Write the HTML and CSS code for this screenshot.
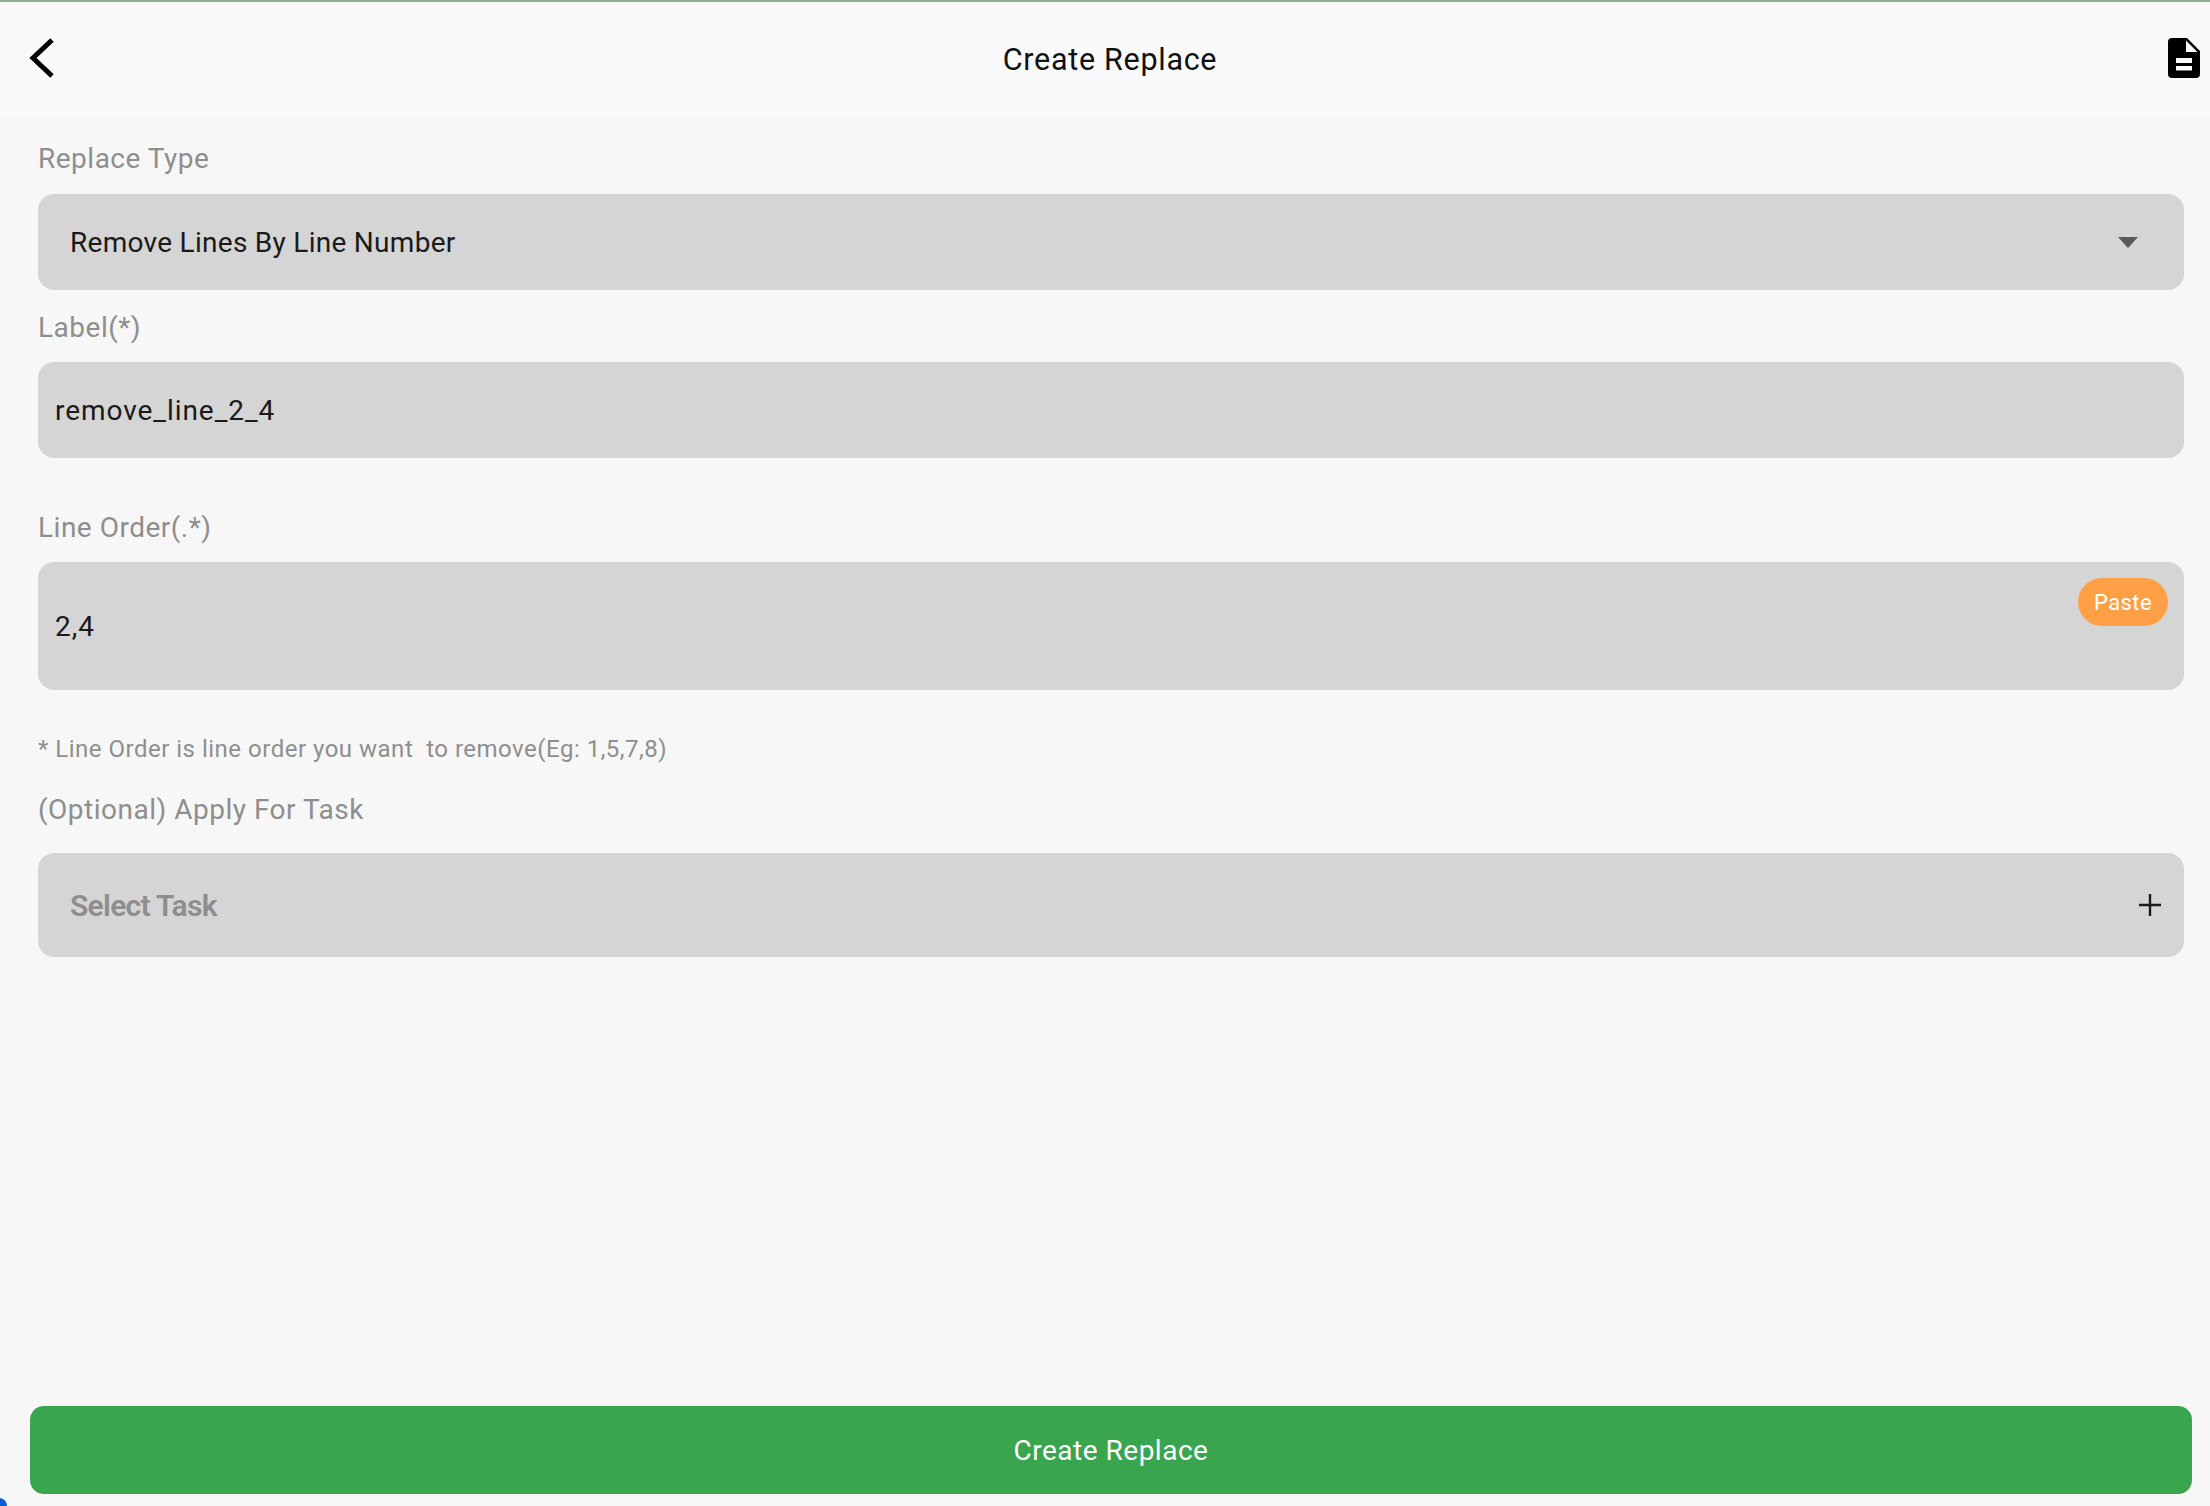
FILE: index.html
```html
<!DOCTYPE html>
<html lang="en">
<head>
<meta charset="utf-8">
<title>Create Replace</title>
<link rel="stylesheet" href="styles.css">
</head>
<body>
<div class="app">
  <header class="topbar">
    <button class="icon-btn back" aria-label="Back">
      <svg width="30" height="44" viewBox="0 0 30 44"><path d="M25 4 L6 22 L25 40" fill="none" stroke="#000" stroke-width="5"/></svg>
    </button>
    <h1 class="title">Create Replace</h1>
    <button class="icon-btn doc" aria-label="Document">
      <svg width="32" height="40" viewBox="0 0 32 40"><path fill-rule="evenodd" d="M4 0H19L32 13V36a4 4 0 0 1-4 4H4a4 4 0 0 1-4-4V4a4 4 0 0 1 4-4ZM18 2.5V14H29.5L18 2.5ZM8 20V25H24V20ZM8 28V32.500H24V28Z" fill="#000"/></svg>
    </button>
  </header>
  <main class="form">
    <label class="label l1">Replace Type</label>
    <div class="field select">
      <span class="value">Remove Lines By Line Number</span>
      <svg class="caret" width="20" height="11" viewBox="0 0 20 11"><path d="M0 0H20L10 11Z" fill="#595959"/></svg>
    </div>
    <label class="label l2">Label(*)</label>
    <div class="field input"><span class="value">remove_line_2_4</span></div>
    <label class="label l3">Line Order(.*)</label>
    <div class="field input tall">
      <span class="value">2,4</span>
      <button class="paste">Paste</button>
    </div>
    <p class="hint">* Line Order is line order you want&nbsp; to remove(Eg: 1,5,7,8)</p>
    <label class="label l4">(Optional) Apply For Task</label>
    <div class="field select task">
      <span class="placeholder">Select Task</span>
      <svg class="plus" width="22" height="22" viewBox="0 0 22 22"><path d="M11 0V22M0 11H22" stroke="#1c1c1c" stroke-width="2.4" fill="none"/></svg>
    </div>
  </main>
  <footer class="actions">
    <button class="submit">Create Replace</button>
  </footer>
  <span class="corner"></span>
</div>
</body>
</html>
```
FILE: styles.css
```css
* { box-sizing: border-box; }
html, body { margin: 0; padding: 0; height: 100%; }
body { font-family: Roboto, "Liberation Sans", sans-serif; background: #f7f7f7; overflow: hidden; }
button { font: inherit; border: 0; padding: 0; background: none; }

.app { position: relative; display: flex; flex-direction: column; height: 1506px; overflow: hidden; }

.topbar {
  display: flex; align-items: center; justify-content: space-between;
  height: 114px; padding: 0 10px 0 27px;
  border-top: 2px solid #8fae93; background: #fafafc;
}
.icon-btn { display: flex; align-items: center; }
.title { margin: 2px 0 0 -5px; font-size: 30.5px; font-weight: 400; color: #111; letter-spacing: 0.7px; }

.form { flex: 1; display: flex; flex-direction: column; padding: 0 26px 0 38px; }
.label { display: block; font-size: 28px; line-height: 34px; color: #8e8e8e; letter-spacing: 0.5px; }
.l1 { padding-top: 28px; padding-bottom: 18px; }
.l2 { padding-top: 21px; padding-bottom: 17px; }
.l3 { padding-top: 53px; padding-bottom: 17px; }
.l4 { padding-top: 0; padding-bottom: 26px; }

.field { display: flex; align-items: center; justify-content: space-between; position: relative; background: #d5d5d5; border-radius: 16px; }
.select { height: 96px; padding: 0 46px 0 32px; }
.input { height: 96px; padding: 0 17px; }
.tall { height: 128px; }
.task { height: 104px; padding-right: 23px; }
.value { font-size: 28px; color: #1a1a1a; letter-spacing: 0.28px; }
.input .value { letter-spacing: 0.95px; }
.placeholder { font-size: 30px; font-weight: 600; color: #8e8e8e; letter-spacing: -0.7px; }

.paste {
  position: absolute; top: 16px; right: 16px; width: 90px; height: 48px;
  border-radius: 24px; background: #ffa046; color: #fff; font-size: 22px; letter-spacing: 0.4px;
}

.hint { margin: 43px 0 28px; font-size: 24px; line-height: 32px; color: #8e8e8e; letter-spacing: 0.5px; }

.actions { padding: 0 18px 12px 30px; }
.submit {
  display: block; width: 100%; height: 88px; border-radius: 14px;
  background: #39a54e; color: #fff; font-size: 28px; letter-spacing: 0.5px;
}

.corner { position: absolute; left: -9px; bottom: -8px; width: 16px; height: 16px; border-radius: 50%; background: #0a5fd0; }
```
